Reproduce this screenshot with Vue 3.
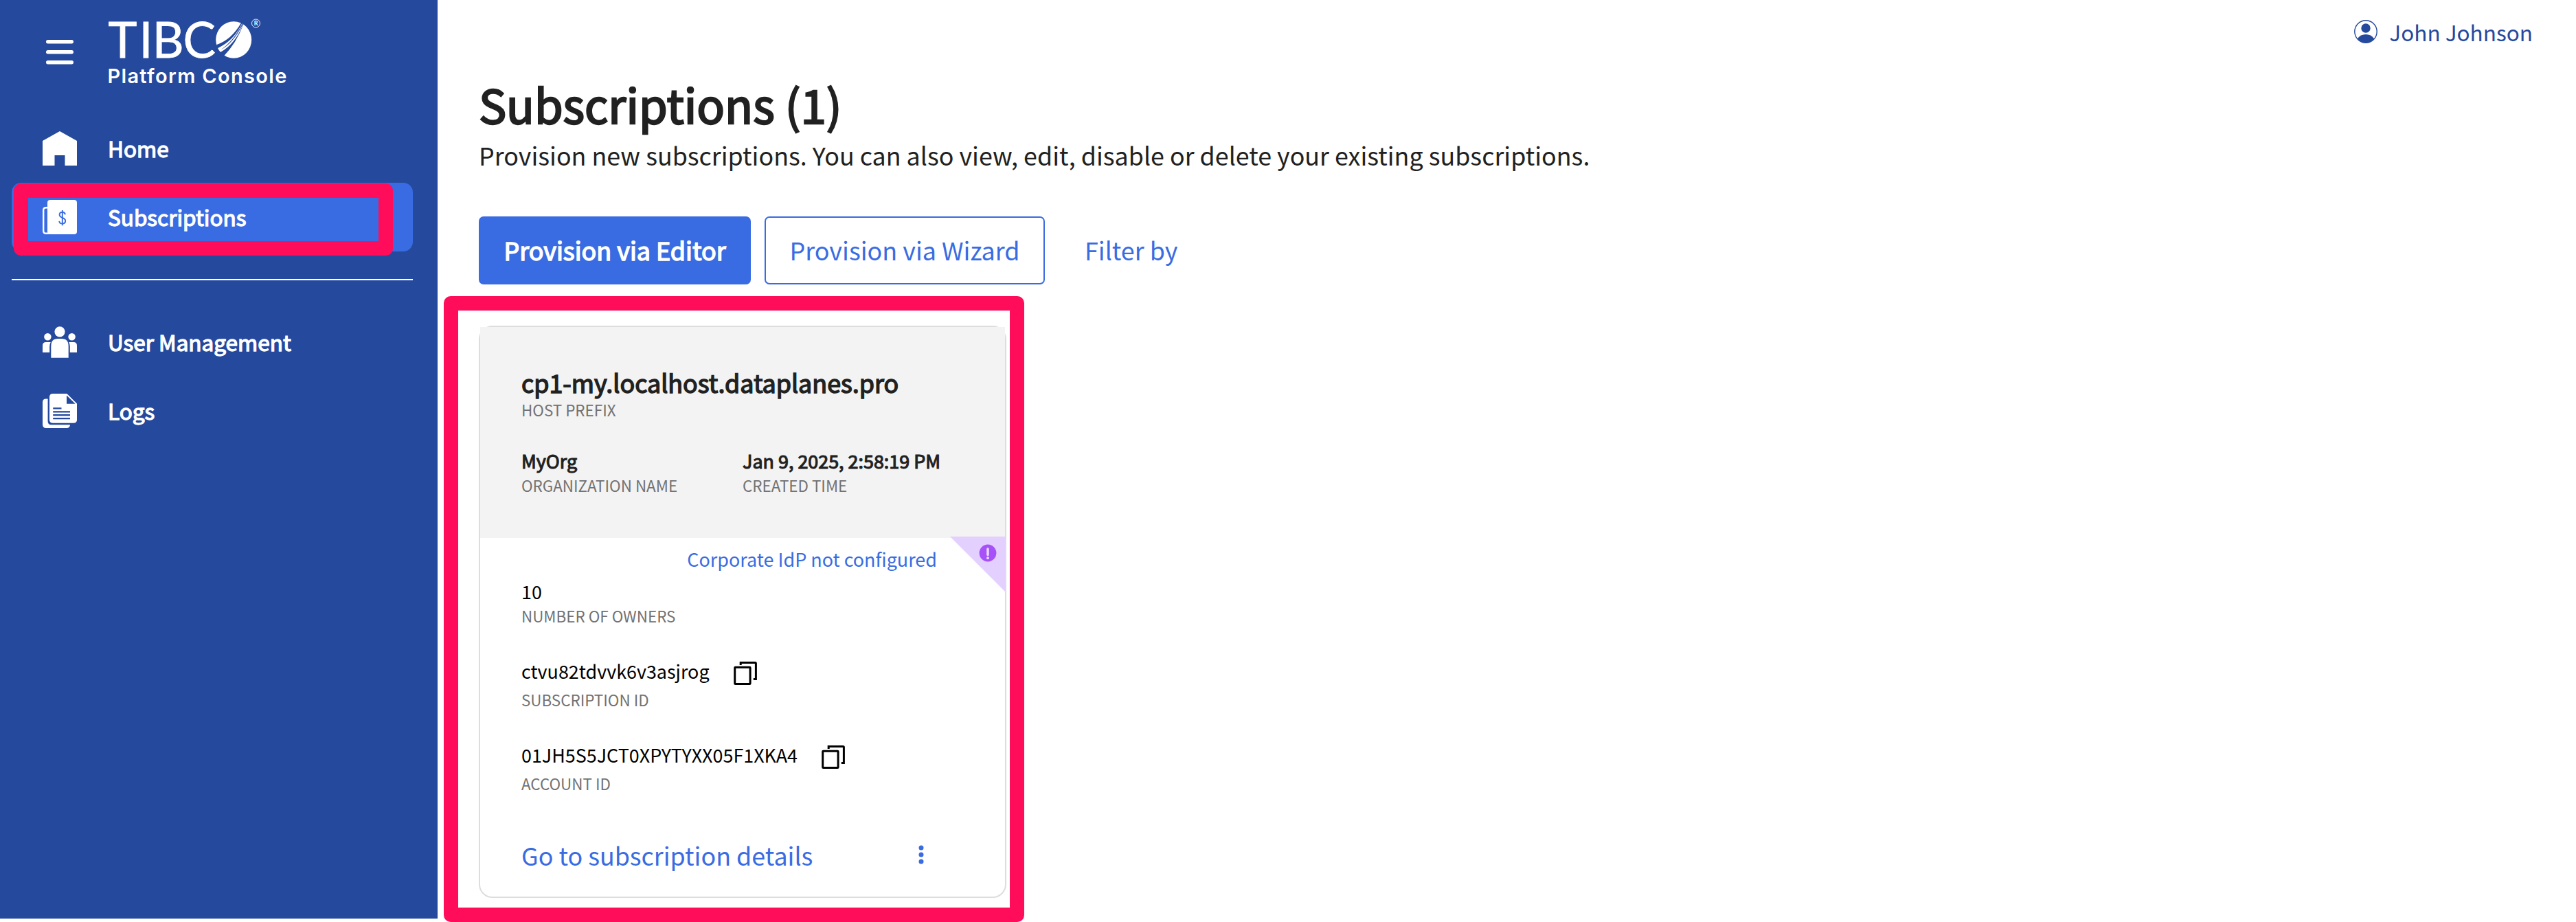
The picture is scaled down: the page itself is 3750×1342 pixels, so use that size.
<script setup>
const primaryNav = [
  { label: 'Home', icon: 'home', active: false },
  { label: 'Subscriptions', icon: 'subscriptions', active: true },
]
const secondaryNav = [
  { label: 'User Management', icon: 'users', active: false },
  { label: 'Logs', icon: 'logs', active: false },
]
const ids = [
  { value: 'ctvu82tdvvk6v3asjrog', label: 'Subscription ID' },
  { value: '01JH5S5JCT0XPYTYXX05F1XKA4', label: 'Account ID' },
]
</script>

<template>
  <div class="page">
    <aside class="sidebar">
      <div class="brand">
        <svg class="burger" width="40" height="36" viewBox="0 0 40 36" fill="#fff">
          <rect width="40" height="5.4" rx="2.7" />
          <rect y="15" width="40" height="5.4" rx="2.7" />
          <rect y="30" width="40" height="5.4" rx="2.7" />
        </svg>
        <svg class="logo" width="290" height="130" viewBox="150 0 290 130">
          <text class="logo-word" x="157.4 202.5 221.8 266.5" y="84">TIBC</text>
          <ellipse cx="340.2" cy="58" rx="26" ry="26.8" fill="#fff" />
          <g fill="#25499c">
            <path d="M351.2 33 Q337 58 315 65.2 L316.3 70.4 Q340 60 352.6 33.6Z" />
            <path d="M353 34 Q340 60 321 72.8 Q340 62.5 353.9 34.4Z" />
            <path d="M354.6 34.8 Q344 63 325.9 81.4 L320 76.4 Q343 64 354 34.4Z" />
          </g>
          <circle cx="372.5" cy="34" r="6" fill="none" stroke="#fff" stroke-width="0.9" />
          <text class="logo-reg" x="372.6" y="37.3" text-anchor="middle">R</text>
          <text class="logo-sub" x="156.4" y="121" textLength="261">Platform Console</text>
        </svg>
      </div>

      <nav>
        <template v-for="(group, gi) in [primaryNav, secondaryNav]" :key="gi">
          <hr v-if="gi === 1" class="divider" />
          <a v-for="item in group" :key="item.label" class="nav-item" :class="{ active: item.active }">
            <svg class="nav-icon" width="50" height="50" viewBox="0 0 50 50">
              <path v-if="item.icon === 'home'" fill="#fff" d="M25 0 50 14V50H32.5V35H17.5V50H0V14Z" />
              <g v-else-if="item.icon === 'subscriptions'">
                <path d="M8 11.2H5Q1.2 11.2 1.2 15V45Q1.2 48.8 5 48.8H9" fill="none" stroke="#fff" stroke-width="2.4" />
                <rect x="7" width="43" height="50" rx="4" fill="#fff" />
                <path d="M33 21.2C32.4 18.8 30.8 17.8 28.8 17.8C26.2 17.8 24.6 19.3 24.6 21.6C24.6 24.2 26.6 25.2 28.8 26C31.2 26.8 33.2 27.9 33.2 30.6C33.2 33.2 31.3 34.6 28.8 34.6C26.2 34.6 24.5 33.2 24.2 30.8M28.8 15V37.3" fill="none" stroke="#396ce2" stroke-width="1.9" />
              </g>
              <g v-else-if="item.icon === 'users'" fill="#fff">
                <circle cx="25" cy="9.8" r="7.6" />
                <circle cx="7.4" cy="17.3" r="5.2" />
                <circle cx="42.6" cy="17.3" r="5.2" />
                <path d="M12.3 47.7V31Q12.3 20 22 20H28Q37.7 20 37.7 31V47.7Z" />
                <path d="M0 40V30Q0 25 5 25H11.7Q10.2 28 10.2 31.5V40Z" />
                <path d="M50 40V30Q50 25 45 25H38.3Q39.8 28 39.8 31.5V40Z" />
              </g>
              <g v-else>
                <path fill="#fff" d="M7.6 7.4H5Q0 7.4 0 12.4V45Q0 50 5 50H35Q40 50 40 45.2H12.6Q7.6 45.2 7.6 40.2Z" />
                <path fill="#fff" d="M15 0H35.4L50 14.4V38Q50 42.8 45 42.8H15Q10 42.8 10 38V5Q10 0 15 0Z" />
                <path fill="#25499c" d="M35 2.6V14.8H47.6Z" />
                <path stroke="#25499c" stroke-width="2.2" d="M15.2 21.3H27.5M15.2 26.3H40M15.2 31.2H40M15.2 36.1H40" />
              </g>
            </svg>
            <span class="nav-label strong">{{ item.label }}</span>
            <i v-if="item.active" class="highlight nav-highlight"></i>
          </a>
        </template>
      </nav>
    </aside>

    <main class="main">
      <header class="topbar">
        <svg width="34" height="34" viewBox="0 0 34 34">
          <circle cx="17" cy="17" r="16.2" fill="none" stroke="#25499c" stroke-width="1.4" />
          <circle cx="17" cy="12" r="6.7" fill="#25499c" />
          <path fill="#25499c" d="M4.8 27.3Q9.5 20.9 17 20.9T29.2 27.3Q24.5 33.2 17 33.2T4.8 27.3Z" />
        </svg>
        <span>John Johnson</span>
      </header>

      <h1 class="strong">Subscriptions (1)</h1>
      <p class="lead">Provision new subscriptions. You can also view, edit, disable or delete your existing subscriptions.</p>

      <div class="actions">
        <button class="btn primary strong">Provision via Editor</button>
        <button class="btn outline">Provision via Wizard</button>
        <button class="btn link">Filter by</button>
      </div>

      <section class="card">
        <div class="card-head">
          <div class="host strong">cp1-my.localhost.dataplanes.pro</div>
          <div class="label">Host Prefix</div>
          <div class="meta">
            <div class="meta-org">
              <div class="value strong">MyOrg</div>
              <div class="label">Organization Name</div>
            </div>
            <div>
              <div class="value strong">Jan 9, 2025, 2:58:19 PM</div>
              <div class="label">Created Time</div>
            </div>
          </div>
        </div>

        <div class="card-body">
          <svg class="alert" width="80" height="80" viewBox="0 0 80 80">
            <path fill="#e4d0fe" d="M0 0H80V80Z" />
            <circle cx="55" cy="24" r="12.4" fill="#a652f8" />
            <path d="M55 18V26.5" stroke="#e9d8ff" stroke-width="3.6" stroke-linecap="round" />
            <circle cx="55" cy="31.2" r="2" fill="#e9d8ff" />
          </svg>
          <a class="idp">Corporate IdP not configured</a>
          <div class="owners">
            <div class="value">10</div>
            <div class="label">Number of Owners</div>
          </div>
          <div v-for="id in ids" :key="id.label" class="id-block">
            <div class="id-row">
              <span class="value">{{ id.value }}</span>
              <svg width="34" height="34" viewBox="0 0 34 34" fill="none" stroke="#000" stroke-width="3">
                <rect x="1.7" y="8.3" width="22.4" height="24.2" rx="0.8" />
                <path d="M10.2 5V1.5H31.3Q32.4 1.5 32.4 2.6V25.5H28.8" />
              </svg>
            </div>
            <div class="label">{{ id.label }}</div>
          </div>
          <div class="card-foot">
            <a>Go to subscription details</a>
            <svg width="8" height="28" viewBox="0 0 8 28" fill="#396ce2">
              <circle cx="4" cy="4" r="3.5" />
              <circle cx="4" cy="14" r="3.5" />
              <circle cx="4" cy="24" r="3.5" />
            </svg>
          </div>
        </div>
        <i class="highlight card-highlight"></i>
      </section>
    </main>
  </div>
</template>

<style>
body {
  background: #fff;
  overflow: hidden;
}
</style>

<style scoped>
.page {
  display: flex;
  align-items: flex-start;
  width: 3750px;
  height: 1342px;
  overflow: hidden;
  background: #fff;
  color: #212121;
  font-family: "Noto Sans CJK SC", "Noto Sans", sans-serif;
  font-weight: 400;
}
.strong {
  -webkit-text-stroke: 0.04em currentColor;
}
.sidebar {
  box-sizing: border-box;
  flex: none;
  width: 637px;
  height: 1337px;
  padding: 0 36px 0 17px;
  background: #25499c;
  color: #fff;
}
.brand {
  display: flex;
  align-items: flex-start;
  height: 166px;
  padding-left: 50px;
}
.burger {
  margin-top: 58px;
}
.logo {
  margin-left: 43px;
  overflow: visible;
}
.logo text {
  fill: #fff;
}
.logo-word {
  font: 400 71px Lato, sans-serif;
  stroke: #fff;
  stroke-width: 0.8px;
}
.logo-reg {
  font: 700 9px Lato, sans-serif;
}
.logo-sub {
  font: 600 29px Inter, sans-serif;
}
.nav-item {
  position: relative;
  display: flex;
  align-items: center;
  height: 100px;
  padding-left: 45px;
  border-radius: 14px;
}
.nav-item.active {
  background: #396ce2;
}
.nav-label {
  margin-left: 45px;
  padding-bottom: 3px;
  font-size: 31.5px;
  line-height: 48px;
}
.divider {
  height: 2px;
  margin: 40px 0;
  border: 0;
  background: #fff;
}
.highlight {
  position: absolute;
  box-sizing: border-box;
  border: 21px solid #ff0d5a;
  border-radius: 10px;
}
.nav-highlight {
  left: 3px;
  top: 1px;
  width: 552px;
  height: 105px;
}
.main {
  flex: 1;
  padding-left: 60px;
}
.topbar {
  display: flex;
  justify-content: flex-end;
  align-items: center;
  gap: 17px;
  height: 40px;
  padding: 26px 63px 0 0;
  color: #25499c;
  font-size: 31.5px;
  line-height: 40px;
}
h1 {
  margin: 45px 0 0;
  font-size: 67.3px;
  font-weight: 400;
  line-height: 80px;
}
h1.strong {
  -webkit-text-stroke-width: 0.035em;
}
.lead {
  margin: 9px 0 0;
  font-size: 35.85px;
  line-height: 50px;
}
.actions {
  display: flex;
  margin-top: 65px;
}
.btn {
  box-sizing: border-box;
  height: 99px;
  padding: 0 0 3px;
  border: 2px solid transparent;
  border-radius: 7px;
  background: none;
  color: #396ce2;
  font-family: inherit;
  font-size: 35.9px;
  line-height: 50px;
  white-space: nowrap;
}
.btn.primary {
  width: 396px;
  background: #396ce2;
  border-color: #396ce2;
  color: #fff;
}
.btn.outline {
  width: 408px;
  margin-left: 20px;
  border-color: #396ce2;
}
.btn.link {
  margin-left: 56px;
}
.card {
  position: relative;
  box-sizing: border-box;
  width: 768px;
  height: 833px;
  margin-top: 60px;
  border: 2px solid #ddd;
  border-radius: 20px;
}
.card-head {
  box-sizing: border-box;
  height: 307px;
  padding: 56px 0 0 60px;
  background: #f3f3f3;
}
.host {
  font-size: 35.85px;
  line-height: 48px;
}
.label {
  color: #727272;
  font-size: 22.4px;
  line-height: 32px;
  text-transform: uppercase;
}
.value {
  font-size: 26.9px;
  line-height: 38px;
}
.meta {
  display: flex;
  margin-top: 40px;
}
.meta-org {
  width: 322px;
}
.card-body {
  position: relative;
  padding: 12px 59px 0 60px;
  color: #000;
}
.alert {
  position: absolute;
  top: -2px;
  right: 0;
}
.idp {
  display: block;
  padding-right: 40px;
  color: #396ce2;
  font-size: 26.95px;
  line-height: 38px;
  text-align: right;
}
.owners {
  margin-top: 9px;
}
.id-block {
  margin-top: 46px;
}
.id-row {
  display: flex;
  gap: 35px;
  height: 44px;
}
.id-row svg {
  margin-top: 5px;
}
.card-foot {
  display: flex;
  justify-content: space-between;
  align-items: center;
  margin-top: 63px;
  padding-right: 59px;
  color: #396ce2;
  font-size: 35.85px;
  line-height: 50px;
}
.card-highlight {
  left: -53px;
  top: -45px;
  width: 845px;
  height: 911px;
}
</style>
